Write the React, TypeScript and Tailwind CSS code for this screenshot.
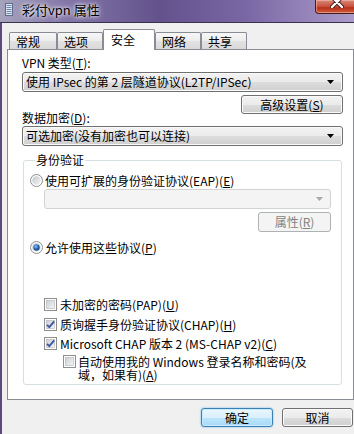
import React, { useId } from 'react';

const Mn = ({ c }: { c: string }) => <span className="underline underline-offset-[1px]">{c}</span>;

const Arrow = ({ color = '#000' }: { color?: string }) => (
  <svg width="7" height="4" viewBox="0 0 7 4">
    <path d="M0 0h7L3.5 4z" fill={color} />
  </svg>
);

const Combo = ({ children }: { children: React.ReactNode }) => (
  <div className="flex h-[20px] items-center justify-between rounded-[3px] border border-[#707070] bg-[linear-gradient(180deg,#f2f2f2_0%,#ebebeb_50%,#dddddd_50%,#cfcfcf_100%)] pl-[3px] pr-[8px] leading-[12px] shadow-[inset_0_0_0_1px_#fbfbfb] whitespace-nowrap">
    <span>{children}</span>
    <Arrow />
  </div>
);

const Radio = ({ checked }: { checked?: boolean }) => {
  const id = useId().replace(/:/g, '');
  return (
    <svg width="13" height="13" viewBox="0 0 13 13" className="shrink-0">
      <defs>
        <linearGradient id={`ro${id}`} x1="0" y1="0" x2="1" y2="1">
          <stop offset="0" stopColor="#f6f6f6" />
          <stop offset="1" stopColor="#ffffff" />
        </linearGradient>
        <linearGradient id={`ri${id}`} x1="0" y1="0" x2="1" y2="1">
          <stop offset="0" stopColor="#c4c8ce" />
          <stop offset="1" stopColor="#f4f4f4" />
        </linearGradient>
        <radialGradient id={`rd${id}`} cx="0.4" cy="0.35" r="0.7">
          <stop offset="0" stopColor="#8cc9f5" />
          <stop offset="0.5" stopColor="#2c6fb8" />
          <stop offset="1" stopColor="#123f7a" />
        </radialGradient>
      </defs>
      <circle cx="6.5" cy="6.5" r="6" fill={`url(#ro${id})`} stroke="#8e8f8f" />
      <circle cx="6.5" cy="6.5" r="4.3" fill={`url(#ri${id})`} />
      {checked && <circle cx="6.5" cy="6.5" r="3.2" fill={`url(#rd${id})`} />}
    </svg>
  );
};

const Check = ({ checked }: { checked?: boolean }) => {
  const id = useId().replace(/:/g, '');
  return (
    <svg width="13" height="13" viewBox="0 0 13 13" className="shrink-0">
      <defs>
        <linearGradient id={`cb${id}`} x1="0" y1="0" x2="1" y2="1">
          <stop offset="0" stopColor="#cbcfd5" />
          <stop offset="1" stopColor="#f6f6f6" />
        </linearGradient>
      </defs>
      <rect x="0.5" y="0.5" width="12" height="12" fill="#fff" stroke="#8e8f8f" />
      <rect x="2.5" y="2.5" width="8" height="8" fill={`url(#cb${id})`} stroke="#aeb3b9" strokeWidth="0.6" />
      {checked && (
        <path d="M3 6.8 L5.3 9.2 L10.2 3.3" fill="none" stroke="#3f59a0" strokeWidth="1.9" strokeLinejoin="round" />
      )}
    </svg>
  );
};

const DocIcon = () => (
  <svg width="8" height="13" viewBox="0 0 8 13">
    <rect x="0.5" y="0.5" width="7" height="12" fill="#dfe6ef" stroke="#5d6f8c" />
    {[2.5, 4.5, 6.5, 8.5, 10.5].map((y) => (
      <line key={y} x1="1.5" x2="6.5" y1={y} y2={y} stroke="#6f87aa" />
    ))}
  </svg>
);

const tabBase = 'text-[12px] leading-[12px] pl-[6px] border border-b-0 border-[#898c95] rounded-t-[2px]';
const tabOff = `${tabBase} h-[17px] mb-[1px] pt-[3px] bg-[linear-gradient(180deg,#f7f7f7_0%,#ececec_50%,#e2e2e2_50%,#d9d9d9_100%)]`;

export default function App() {
  return (
    <div className="flex h-[434px] w-[354px] flex-col overflow-hidden bg-[#f0f0f0] font-['Noto_Sans_CJK_SC','Noto_Sans',sans-serif] text-[12px] text-black">
      {/* title bar */}
      <div className="flex h-[23px] shrink-0 items-start border-b border-[#39324f] bg-[linear-gradient(90deg,#a6a3bd_0%,#8377a8_18%,#63528c_45%,#7a68a6_70%,#ab9bc8_100%)]">
        <div className="ml-[5px] mt-[3px]">
          <DocIcon />
        </div>
        <div className="ml-[9px] mt-[2px] text-[13px] leading-[16px] [text-shadow:0_0_6px_#fff,0_0_3px_#fff]">
          彩付vpn 属性
        </div>
        <div className="ml-auto -mr-[4px] flex h-[14px] w-[43px] justify-center overflow-hidden rounded-bl-[4px] border border-t-0 border-[#4a1a16] bg-[linear-gradient(180deg,#d98a7c_0%,#c9503b_50%,#b8301b_60%,#d0603f_100%)] shadow-[inset_0_0_0_1px_rgba(255,200,190,0.5)]">
          <svg width="14" height="12" viewBox="0 0 14 12" className="-mt-[4px]">
            <path d="M2 1 L12 11 M12 1 L2 11" stroke="#3b1510" strokeWidth="4" strokeLinecap="round" />
            <path d="M2 1 L12 11 M12 1 L2 11" stroke="#ffffff" strokeWidth="2.4" strokeLinecap="round" />
          </svg>
        </div>
      </div>

      {/* body */}
      <div className="flex flex-1 flex-col border-l-2 border-[#5a4b7c] pl-[5px]">
        {/* tabs */}
        <div className="relative z-10 -mb-px mt-[6px] flex h-[21px] items-end pl-[2px]">
          <div className={`${tabOff} w-[48px]`}>常规</div>
          <div className={`${tabOff} w-[46px]`}>选项</div>
          <div className={`${tabBase} h-[21px] w-[52px] bg-white pl-[7px] pt-[4px]`}>安全</div>
          <div className={`${tabOff} w-[46px]`}>网络</div>
          <div className={`${tabOff} w-[46px]`}>共享</div>
        </div>

        {/* panel */}
        <div className="flex h-[351px] w-[347px] flex-col border border-[#898c95] bg-white pl-[14px] pr-[10px] pt-[7px] leading-[12px]">
          <div>
            VPN 类型(<Mn c="T" />):
          </div>
          <div className="mt-[3px]">
            <Combo>使用 IPsec 的第 2 层隧道协议(L2TP/IPSec)</Combo>
          </div>
          <div className="mt-[3px] flex h-[19px] w-[102px] items-center justify-center self-end rounded-[3px] border border-[#707070] bg-[linear-gradient(180deg,#f2f2f2_0%,#ebebeb_50%,#dddddd_50%,#cfcfcf_100%)] shadow-[inset_0_0_0_1px_#fbfbfb]">
            高级设置(<Mn c="S" />)
          </div>
          <div className="-mt-[2px]">
            数据加密(<Mn c="D" />):
          </div>
          <div className="mt-[2px]">
            <Combo>可选加密(没有加密也可以连接)</Combo>
          </div>

          <fieldset className="mx-[1px] mt-[8px] flex flex-col rounded-[3px] border border-[#d5dfe5] pb-[3px] pl-[6px] pr-[10px]">
            <legend className="ml-[5px] px-[1px] leading-[12px]">身份验证</legend>
            <div className="mt-[8px] flex h-[13px] items-center gap-[2px]">
              <Radio />
              <span>
                使用可扩展的身份验证协议(EAP)(<Mn c="E" />)
              </span>
            </div>
            <div className="ml-[14px] mt-[2px] flex h-[20px] items-center justify-end rounded-[3px] border border-[#d3d3d3] bg-[#f4f4f4] pr-[7px]">
              <Arrow color="#a8a8a8" />
            </div>
            <div className="mt-[3px] flex h-[20px] w-[73px] items-center justify-center self-end rounded-[3px] border border-[#adb2b5] bg-[#f4f4f4] text-[#838383]">
              属性(<Mn c="R" />)
            </div>
            <div className="mt-[9px] flex h-[13px] items-center gap-[2px]">
              <Radio checked />
              <span>
                允许使用这些协议(<Mn c="P" />)
              </span>
            </div>

            <div className="ml-[14px] mt-[44px] flex h-[13px] items-center gap-[3px]">
              <Check />
              <span>
                未加密的密码(PAP)(<Mn c="U" />)
              </span>
            </div>
            <div className="ml-[14px] mt-[7px] flex h-[13px] items-center gap-[3px]">
              <Check checked />
              <span>
                质询握手身份验证协议(CHAP)(<Mn c="H" />)
              </span>
            </div>
            <div className="ml-[14px] mt-[6px] flex h-[13px] items-center gap-[3px]">
              <Check checked />
              <span className="whitespace-nowrap">
                Microsoft CHAP 版本 2 (MS-CHAP v2)(<Mn c="C" />)
              </span>
            </div>
            <div className="ml-[33px] mt-[5px] flex items-start gap-[2px]">
              <Check />
              <div className="flex flex-col whitespace-nowrap">
                <div className="h-[13px] leading-[13px]">自动使用我的 Windows 登录名称和密码(及</div>
                <div className="h-[13px] leading-[13px]">
                  域，如果有)(<Mn c="A" />)
                </div>
              </div>
            </div>
          </fieldset>
        </div>

        {/* dialog buttons */}
        <div className="mt-[8px] flex justify-end gap-[9px] pr-[1px]">
          <div className="flex h-[19px] w-[72px] items-center justify-center rounded-[3px] border border-[#3c7fb1] bg-[linear-gradient(180deg,#eaf6fd_0%,#d9f0fc_50%,#bee6fd_50%,#a7d9f5_100%)] shadow-[0_0_2px_#5fb4ee,inset_0_0_0_1px_#c8ecfd]">
            确定
          </div>
          <div className="flex h-[19px] w-[71px] items-center justify-center rounded-[3px] border border-[#707070] bg-[linear-gradient(180deg,#f2f2f2_0%,#ebebeb_50%,#dddddd_50%,#cfcfcf_100%)] shadow-[inset_0_0_0_1px_#fbfbfb]">
            取消
          </div>
        </div>
      </div>
    </div>
  );
}
